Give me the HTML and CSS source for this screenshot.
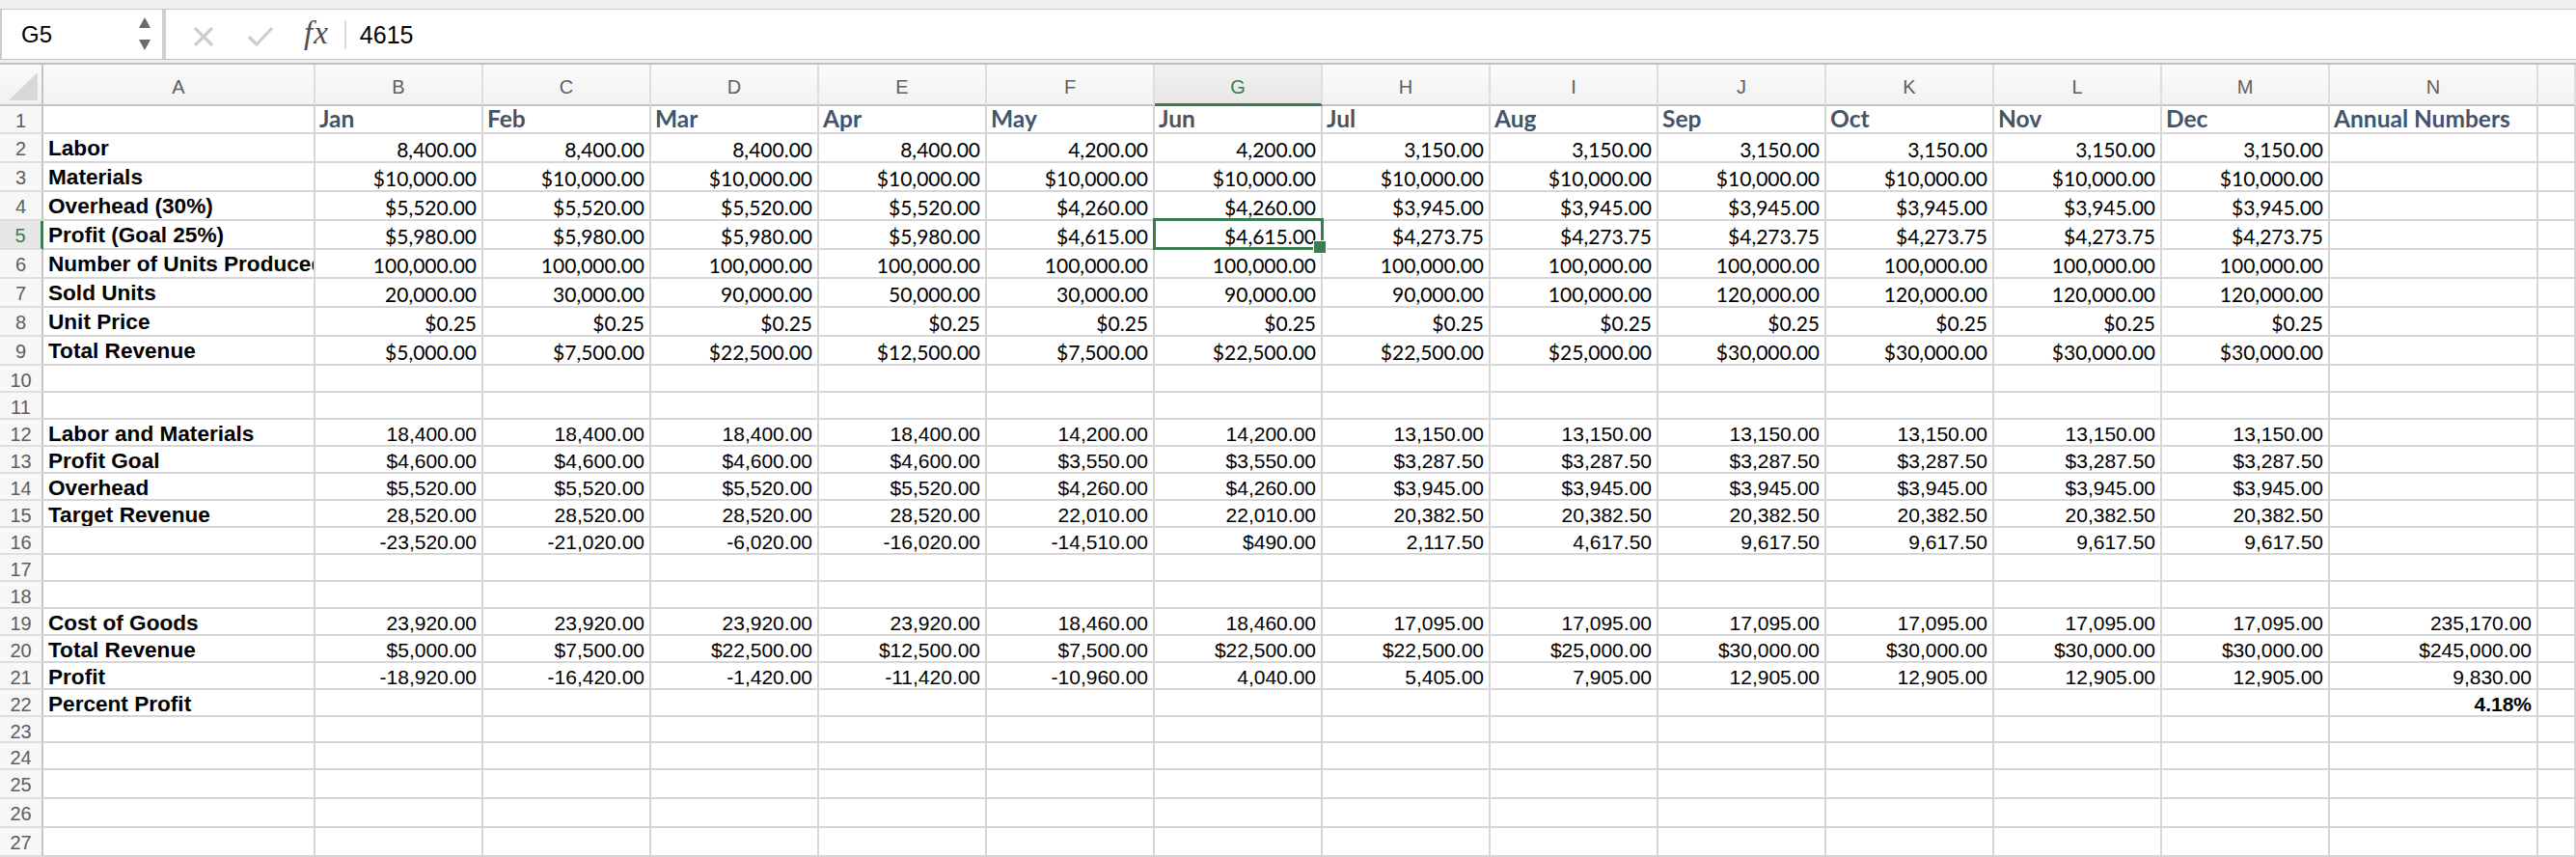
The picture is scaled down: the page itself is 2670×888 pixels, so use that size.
FILE: index.html
```html
<!DOCTYPE html>
<html>
<head>
<meta charset="utf-8">
<link rel="stylesheet" href="styles.css">
</head>
<body>
<div class="top"></div>
<div class="fbar">
  <div class="namebox">
    <span class="ref">G5</span>
    <svg class="spin" width="14" height="36" viewBox="0 0 14 36"><path d="M7 0 L13 11 L1 11 Z" fill="#6b6b6b"/><path d="M1 23 L13 23 L7 34 Z" fill="#6b6b6b"/></svg>
  </div>
  <div class="formula">
    <svg class="ico-x" width="22" height="20" viewBox="0 0 22 20"><path d="M2 1 L20 19 M20 1 L2 19" stroke="#cdcdcd" stroke-width="3.2" fill="none"/></svg>
    <svg class="ico-ok" width="28" height="22" viewBox="0 0 28 22"><path d="M2 11 L10 19 L26 2" stroke="#cdcdcd" stroke-width="3.2" fill="none"/></svg>
    <span class="fx">fx</span>
    <span class="sep"></span>
    <span class="val">4615</span>
  </div>
</div>
<div class="band"></div>
<div class="sheet">
  <div class="corner"></div><div class="ch">A</div><div class="ch">B</div><div class="ch">C</div><div class="ch">D</div><div class="ch">E</div><div class="ch">F</div><div class="ch on">G</div><div class="ch">H</div><div class="ch">I</div><div class="ch">J</div><div class="ch">K</div><div class="ch">L</div><div class="ch">M</div><div class="ch">N</div><div class="ch"></div>

  <div class="rh">1</div><div class="c"></div><div class="c mh">Jan</div><div class="c mh">Feb</div><div class="c mh">Mar</div><div class="c mh">Apr</div><div class="c mh">May</div><div class="c mh">Jun</div><div class="c mh">Jul</div><div class="c mh">Aug</div><div class="c mh">Sep</div><div class="c mh">Oct</div><div class="c mh">Nov</div><div class="c mh">Dec</div><div class="c mh">Annual Numbers</div><div class="c"></div>

  <div class="rh">2</div><div class="c lb">Labor</div><div class="c nc">8,400.00</div><div class="c nc">8,400.00</div><div class="c nc">8,400.00</div><div class="c nc">8,400.00</div><div class="c nc">4,200.00</div><div class="c nc">4,200.00</div><div class="c nc">3,150.00</div><div class="c nc">3,150.00</div><div class="c nc">3,150.00</div><div class="c nc">3,150.00</div><div class="c nc">3,150.00</div><div class="c nc">3,150.00</div><div class="c"></div><div class="c"></div>

  <div class="rh">3</div><div class="c lb">Materials</div><div class="c nc">$10,000.00</div><div class="c nc">$10,000.00</div><div class="c nc">$10,000.00</div><div class="c nc">$10,000.00</div><div class="c nc">$10,000.00</div><div class="c nc">$10,000.00</div><div class="c nc">$10,000.00</div><div class="c nc">$10,000.00</div><div class="c nc">$10,000.00</div><div class="c nc">$10,000.00</div><div class="c nc">$10,000.00</div><div class="c nc">$10,000.00</div><div class="c"></div><div class="c"></div>

  <div class="rh">4</div><div class="c lb">Overhead (30%)</div><div class="c nc">$5,520.00</div><div class="c nc">$5,520.00</div><div class="c nc">$5,520.00</div><div class="c nc">$5,520.00</div><div class="c nc">$4,260.00</div><div class="c nc">$4,260.00</div><div class="c nc">$3,945.00</div><div class="c nc">$3,945.00</div><div class="c nc">$3,945.00</div><div class="c nc">$3,945.00</div><div class="c nc">$3,945.00</div><div class="c nc">$3,945.00</div><div class="c"></div><div class="c"></div>

  <div class="rh on">5</div><div class="c lb">Profit (Goal 25%)</div><div class="c nc">$5,980.00</div><div class="c nc">$5,980.00</div><div class="c nc">$5,980.00</div><div class="c nc">$5,980.00</div><div class="c nc">$4,615.00</div><div class="c nc sel">$4,615.00</div><div class="c nc">$4,273.75</div><div class="c nc">$4,273.75</div><div class="c nc">$4,273.75</div><div class="c nc">$4,273.75</div><div class="c nc">$4,273.75</div><div class="c nc">$4,273.75</div><div class="c"></div><div class="c"></div>

  <div class="rh">6</div><div class="c lb">Number of Units Produced</div><div class="c nc">100,000.00</div><div class="c nc">100,000.00</div><div class="c nc">100,000.00</div><div class="c nc">100,000.00</div><div class="c nc">100,000.00</div><div class="c nc">100,000.00</div><div class="c nc">100,000.00</div><div class="c nc">100,000.00</div><div class="c nc">100,000.00</div><div class="c nc">100,000.00</div><div class="c nc">100,000.00</div><div class="c nc">100,000.00</div><div class="c"></div><div class="c"></div>

  <div class="rh">7</div><div class="c lb">Sold Units</div><div class="c nc">20,000.00</div><div class="c nc">30,000.00</div><div class="c nc">90,000.00</div><div class="c nc">50,000.00</div><div class="c nc">30,000.00</div><div class="c nc">90,000.00</div><div class="c nc">90,000.00</div><div class="c nc">100,000.00</div><div class="c nc">120,000.00</div><div class="c nc">120,000.00</div><div class="c nc">120,000.00</div><div class="c nc">120,000.00</div><div class="c"></div><div class="c"></div>

  <div class="rh">8</div><div class="c lb">Unit Price</div><div class="c nc">$0.25</div><div class="c nc">$0.25</div><div class="c nc">$0.25</div><div class="c nc">$0.25</div><div class="c nc">$0.25</div><div class="c nc">$0.25</div><div class="c nc">$0.25</div><div class="c nc">$0.25</div><div class="c nc">$0.25</div><div class="c nc">$0.25</div><div class="c nc">$0.25</div><div class="c nc">$0.25</div><div class="c"></div><div class="c"></div>

  <div class="rh">9</div><div class="c lb">Total Revenue</div><div class="c nc">$5,000.00</div><div class="c nc">$7,500.00</div><div class="c nc">$22,500.00</div><div class="c nc">$12,500.00</div><div class="c nc">$7,500.00</div><div class="c nc">$22,500.00</div><div class="c nc">$22,500.00</div><div class="c nc">$25,000.00</div><div class="c nc">$30,000.00</div><div class="c nc">$30,000.00</div><div class="c nc">$30,000.00</div><div class="c nc">$30,000.00</div><div class="c"></div><div class="c"></div>

  <div class="rh">10</div><div class="c"></div><div class="c"></div><div class="c"></div><div class="c"></div><div class="c"></div><div class="c"></div><div class="c"></div><div class="c"></div><div class="c"></div><div class="c"></div><div class="c"></div><div class="c"></div><div class="c"></div><div class="c"></div><div class="c"></div>

  <div class="rh">11</div><div class="c"></div><div class="c"></div><div class="c"></div><div class="c"></div><div class="c"></div><div class="c"></div><div class="c"></div><div class="c"></div><div class="c"></div><div class="c"></div><div class="c"></div><div class="c"></div><div class="c"></div><div class="c"></div><div class="c"></div>

  <div class="rh">12</div><div class="c lb">Labor and Materials</div><div class="c na">18,400.00</div><div class="c na">18,400.00</div><div class="c na">18,400.00</div><div class="c na">18,400.00</div><div class="c na">14,200.00</div><div class="c na">14,200.00</div><div class="c na">13,150.00</div><div class="c na">13,150.00</div><div class="c na">13,150.00</div><div class="c na">13,150.00</div><div class="c na">13,150.00</div><div class="c na">13,150.00</div><div class="c"></div><div class="c"></div>

  <div class="rh">13</div><div class="c lb">Profit Goal</div><div class="c na">$4,600.00</div><div class="c na">$4,600.00</div><div class="c na">$4,600.00</div><div class="c na">$4,600.00</div><div class="c na">$3,550.00</div><div class="c na">$3,550.00</div><div class="c na">$3,287.50</div><div class="c na">$3,287.50</div><div class="c na">$3,287.50</div><div class="c na">$3,287.50</div><div class="c na">$3,287.50</div><div class="c na">$3,287.50</div><div class="c"></div><div class="c"></div>

  <div class="rh">14</div><div class="c lb">Overhead</div><div class="c na">$5,520.00</div><div class="c na">$5,520.00</div><div class="c na">$5,520.00</div><div class="c na">$5,520.00</div><div class="c na">$4,260.00</div><div class="c na">$4,260.00</div><div class="c na">$3,945.00</div><div class="c na">$3,945.00</div><div class="c na">$3,945.00</div><div class="c na">$3,945.00</div><div class="c na">$3,945.00</div><div class="c na">$3,945.00</div><div class="c"></div><div class="c"></div>

  <div class="rh">15</div><div class="c lb">Target Revenue</div><div class="c na">28,520.00</div><div class="c na">28,520.00</div><div class="c na">28,520.00</div><div class="c na">28,520.00</div><div class="c na">22,010.00</div><div class="c na">22,010.00</div><div class="c na">20,382.50</div><div class="c na">20,382.50</div><div class="c na">20,382.50</div><div class="c na">20,382.50</div><div class="c na">20,382.50</div><div class="c na">20,382.50</div><div class="c"></div><div class="c"></div>

  <div class="rh">16</div><div class="c"></div><div class="c na">-23,520.00</div><div class="c na">-21,020.00</div><div class="c na">-6,020.00</div><div class="c na">-16,020.00</div><div class="c na">-14,510.00</div><div class="c na">$490.00</div><div class="c na">2,117.50</div><div class="c na">4,617.50</div><div class="c na">9,617.50</div><div class="c na">9,617.50</div><div class="c na">9,617.50</div><div class="c na">9,617.50</div><div class="c"></div><div class="c"></div>

  <div class="rh">17</div><div class="c"></div><div class="c"></div><div class="c"></div><div class="c"></div><div class="c"></div><div class="c"></div><div class="c"></div><div class="c"></div><div class="c"></div><div class="c"></div><div class="c"></div><div class="c"></div><div class="c"></div><div class="c"></div><div class="c"></div>

  <div class="rh">18</div><div class="c"></div><div class="c"></div><div class="c"></div><div class="c"></div><div class="c"></div><div class="c"></div><div class="c"></div><div class="c"></div><div class="c"></div><div class="c"></div><div class="c"></div><div class="c"></div><div class="c"></div><div class="c"></div><div class="c"></div>

  <div class="rh">19</div><div class="c lb">Cost of Goods</div><div class="c na">23,920.00</div><div class="c na">23,920.00</div><div class="c na">23,920.00</div><div class="c na">23,920.00</div><div class="c na">18,460.00</div><div class="c na">18,460.00</div><div class="c na">17,095.00</div><div class="c na">17,095.00</div><div class="c na">17,095.00</div><div class="c na">17,095.00</div><div class="c na">17,095.00</div><div class="c na">17,095.00</div><div class="c na">235,170.00</div><div class="c"></div>

  <div class="rh">20</div><div class="c lb">Total Revenue</div><div class="c na">$5,000.00</div><div class="c na">$7,500.00</div><div class="c na">$22,500.00</div><div class="c na">$12,500.00</div><div class="c na">$7,500.00</div><div class="c na">$22,500.00</div><div class="c na">$22,500.00</div><div class="c na">$25,000.00</div><div class="c na">$30,000.00</div><div class="c na">$30,000.00</div><div class="c na">$30,000.00</div><div class="c na">$30,000.00</div><div class="c na">$245,000.00</div><div class="c"></div>

  <div class="rh">21</div><div class="c lb">Profit</div><div class="c na">-18,920.00</div><div class="c na">-16,420.00</div><div class="c na">-1,420.00</div><div class="c na">-11,420.00</div><div class="c na">-10,960.00</div><div class="c na">4,040.00</div><div class="c na">5,405.00</div><div class="c na">7,905.00</div><div class="c na">12,905.00</div><div class="c na">12,905.00</div><div class="c na">12,905.00</div><div class="c na">12,905.00</div><div class="c na">9,830.00</div><div class="c"></div>

  <div class="rh">22</div><div class="c lb">Percent Profit</div><div class="c"></div><div class="c"></div><div class="c"></div><div class="c"></div><div class="c"></div><div class="c"></div><div class="c"></div><div class="c"></div><div class="c"></div><div class="c"></div><div class="c"></div><div class="c"></div><div class="c na b">4.18%</div><div class="c"></div>

  <div class="rh">23</div><div class="c"></div><div class="c"></div><div class="c"></div><div class="c"></div><div class="c"></div><div class="c"></div><div class="c"></div><div class="c"></div><div class="c"></div><div class="c"></div><div class="c"></div><div class="c"></div><div class="c"></div><div class="c"></div><div class="c"></div>

  <div class="rh">24</div><div class="c"></div><div class="c"></div><div class="c"></div><div class="c"></div><div class="c"></div><div class="c"></div><div class="c"></div><div class="c"></div><div class="c"></div><div class="c"></div><div class="c"></div><div class="c"></div><div class="c"></div><div class="c"></div><div class="c"></div>

  <div class="rh">25</div><div class="c"></div><div class="c"></div><div class="c"></div><div class="c"></div><div class="c"></div><div class="c"></div><div class="c"></div><div class="c"></div><div class="c"></div><div class="c"></div><div class="c"></div><div class="c"></div><div class="c"></div><div class="c"></div><div class="c"></div>

  <div class="rh">26</div><div class="c"></div><div class="c"></div><div class="c"></div><div class="c"></div><div class="c"></div><div class="c"></div><div class="c"></div><div class="c"></div><div class="c"></div><div class="c"></div><div class="c"></div><div class="c"></div><div class="c"></div><div class="c"></div><div class="c"></div>

  <div class="rh">27</div><div class="c"></div><div class="c"></div><div class="c"></div><div class="c"></div><div class="c"></div><div class="c"></div><div class="c"></div><div class="c"></div><div class="c"></div><div class="c"></div><div class="c"></div><div class="c"></div><div class="c"></div><div class="c"></div><div class="c"></div>
</div>
</body>
</html>
```

FILE: styles.css
```css
* { box-sizing: border-box; margin: 0; padding: 0; }
html, body { margin: 0; background: #fff; }
body {
  width: 2670px;
  height: 888px;
  overflow: hidden;
  font-family: "Liberation Sans", Arial, sans-serif;
  color: #000;
}

.top {
  height: 10px;
  background: #f0f0f0;
  border-bottom: 1px solid #c9c9c9;
}

.fbar {
  height: 52px;
  display: flex;
  background: #fff;
  border-bottom: 1px solid #c3c3c3;
}

.namebox {
  width: 172px;
  height: 100%;
  display: flex;
  align-items: center;
  justify-content: space-between;
  padding: 0 11px 0 20px;
  border-left: 2px solid #cbcbcb;
  border-right: 4px solid #cfcfcf;
}
.ref { font-size: 24px; line-height: 1; padding-top: 1px; }
.spin { display: block; margin-top: 1px; }

.formula {
  flex: 1;
  display: flex;
  align-items: center;
  height: 100%;
}
.ico-x { margin-left: 28px; display: block; margin-top: 4px; }
.ico-ok { margin-left: 34px; display: block; margin-top: 4px; }
.fx {
  margin-left: 31px;
  font-family: "Liberation Serif", "Times New Roman", serif;
  font-style: italic;
  font-size: 33px;
  letter-spacing: 1px;
  color: #4d4d4d;
  line-height: 1;
  margin-top: -2px;
}
.sep {
  margin-left: 16px;
  width: 2px;
  height: 30px;
  background: #dadada;
}
.val {
  margin-left: 14px;
  font-size: 25px;
  line-height: 1;
  padding-top: 1px;
}

.band {
  height: 5px;
  background: #efefef;
  border-bottom: 2px solid #c0c0c0;
}

.sheet {
  display: grid;
  grid-template-columns: 45px 282px repeat(12, 174px) 216px 1fr;
  grid-template-rows: 43px 29px repeat(8, 30px) repeat(13, 28px) 27px 28px 30px 30px 30px;
}

.corner {
  background: linear-gradient(#fbfbfb, #f1f1f1);
  border-right: 2px solid #c4c4c4;
  border-bottom: 2px solid #c4c4c4;
  display: flex;
  justify-content: flex-end;
  align-items: flex-end;
  padding: 0 4px 4px 0;
}
.corner::before {
  content: "";
  width: 30px;
  height: 29px;
  background: #d8d8d8;
  clip-path: polygon(100% 0, 100% 100%, 0 100%);
}

.ch {
  background: linear-gradient(#fbfbfb, #f2f2f2);
  border-right: 2px solid #dedede;
  border-bottom: 2px solid #c4c4c4;
  text-align: center;
  font-size: 20px;
  line-height: 46px;
  color: #5f5f5f;
  overflow: hidden;
}
.ch.on {
  background: linear-gradient(#f1f1f1, #e7e7e7);
  color: #3d7b50;
  border-bottom: 3px solid #3d7b50;
}

.rh {
  background: #f7f7f7;
  border-right: 2px solid #c4c4c4;
  border-bottom: 2px solid #dedede;
  text-align: center;
  font-size: 20px;
  line-height: 30px;
  color: #5e5e5e;
  overflow: hidden;
}
.rh.on {
  background: #e7e7e7;
  color: #3d7b50;
  border-right: 3px solid #3d7b50;
}

.c {
  border-right: 2px solid #d6d6d6;
  border-bottom: 2px solid #d6d6d6;
  white-space: nowrap;
  overflow: hidden;
  font-size: 21px;
  line-height: 30px;
}

.lb {
  font-weight: bold;
  font-size: 22.6px;
  padding-left: 5px;
}

.mh {
  font-family: Lato, "Liberation Sans", sans-serif;
  font-weight: bold;
  font-size: 24.5px;
  line-height: 26px;
  color: #44546a;
  padding-left: 4px;
  overflow: visible;
}

.nc {
  font-family: Lato, "Liberation Sans", sans-serif;
  font-variant-numeric: tabular-nums;
  font-size: 21px;
  line-height: 32px;
  text-align: right;
  padding-right: 5px;
}

.na {
  text-align: right;
  padding-right: 5px;
}
.na.b { font-weight: bold; }

.sel {
  position: relative;
  overflow: visible;
  z-index: 2;
}
.sel::after {
  content: "";
  position: absolute;
  left: -2px;
  top: -3px;
  right: -3px;
  bottom: -2px;
  border: 3px solid #3d7b50;
  pointer-events: none;
}
.sel::before {
  content: "";
  position: absolute;
  width: 12px;
  height: 12px;
  right: -6px;
  bottom: -6px;
  background: #3d7b50;
  border: 1px solid #fff;
  z-index: 3;
}
```
